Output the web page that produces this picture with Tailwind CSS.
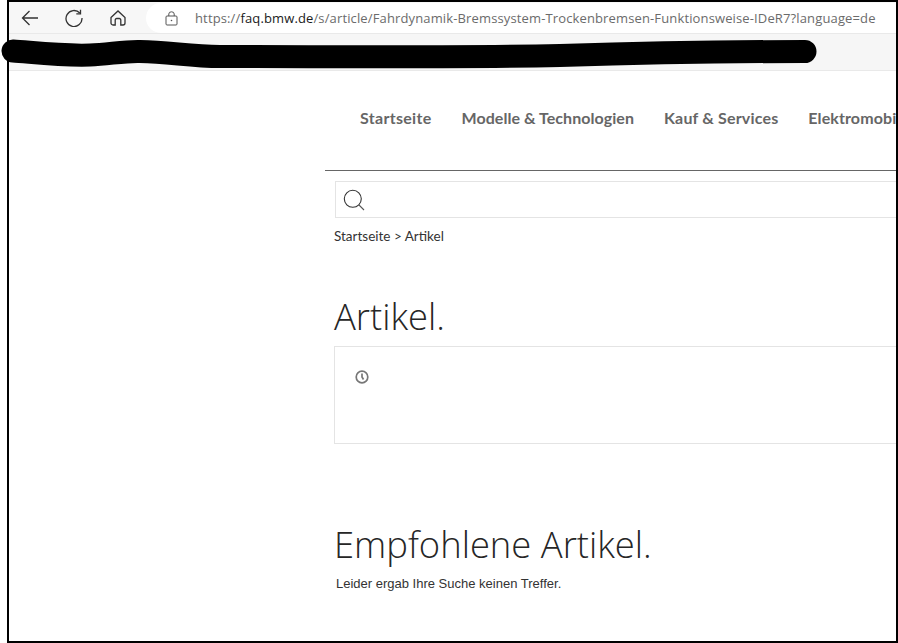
<!DOCTYPE html>
<html lang="de">
<head>
<meta charset="utf-8">
<script src="https://cdn.jsdelivr.net/npm/@tailwindcss/browser@4"></script>
</head>
<body class="bg-white overflow-hidden">
<div class="relative w-[898px] h-[643px] overflow-hidden pl-[7px] font-['Open_Sans',sans-serif]">
  <div class="h-full border-2 border-black flex flex-col overflow-hidden">
    <!-- browser toolbar -->
    <div class="h-[31px] shrink-0 bg-[#f7f7f7] flex items-start">
      <div class="w-[137px] shrink-0 flex items-center h-[31px] text-[#333]">
        <svg class="ml-[12px] w-[18px] h-[18px]" viewBox="0 0 18 18" fill="none" stroke="#333" stroke-width="1.3"><path d="M17 9H1.500M8.500 2 1.500 9l7 7"/></svg>
        <svg class="ml-[26px] w-[18px] h-[18px]" viewBox="0 0 18 18" fill="none" stroke="#333" stroke-width="1.3"><path d="M14.800 4A8 8 0 1 0 17 9"/><path d="M15.500 .8V4.800H11.300"/></svg>
        <svg class="ml-[27px] w-[16px] h-[16px]" viewBox="0 0 16 16" fill="none" stroke="#333" stroke-width="1.3"><path d="M1 7.500 8 1l7 6.500V13a2 2 0 0 1-2 2h-2.200V10a1.500 1.500 0 0 0-1.500-1.500H6.700A1.500 1.500 0 0 0 5.200 10v5H3a2 2 0 0 1-2-2Z"/></svg>
      </div>
      <div class="flex-1 h-[30px] mt-[1px] bg-white rounded-l-[15px] flex items-center pl-[19px]">
        <svg class="w-[13px] h-[15px] shrink-0" viewBox="0 0 13 15" fill="none" stroke="#555" stroke-width="1"><rect x="1" y="5" width="11" height="9" rx="1"/><path d="M3.800 5V3a2.700 2.200 0 0 1 5.400 0v2"/><circle cx="6.500" cy="9.500" r=".8" fill="#555" stroke="none"/></svg>
        <div class="ml-[17px] text-[13px] leading-[18px] tracking-[0.135px] text-[#6b6b6b] whitespace-nowrap">https://<span class="text-[#1a1a1a]">faq.bmw.de</span>/s/article/Fahrdynamik-Bremssystem-Trockenbremsen-Funktionsweise-IDeR7?language=de</div>
      </div>
    </div>
    <!-- bookmarks bar -->
    <div class="h-[38px] shrink-0 bg-[#f6f6f6] border-t border-[#e9e9e9] border-b"></div>
    <!-- page -->
    <div class="relative flex-1 bg-white pl-[316px] overflow-hidden min-w-0">
      <nav class="h-[100px] flex items-start pt-[36px] pl-[35px] gap-[30px] whitespace-nowrap text-[16px] leading-[22px] font-bold text-[#666] font-['Lato',sans-serif] border-b border-[#666] w-[700px]">
        <span class="tracking-[0.3px]">Startseite</span><span class="tracking-[0.05px]">Modelle &amp; Technologien</span><span class="tracking-[0.17px]">Kauf &amp; Services</span><span class="tracking-[0.1px]">Elektromobilität</span>
      </nav>
      <div class="ml-[10px] mt-[10px] h-[37px] w-[700px] border border-[#e4e4e4] flex items-center pl-[7px]">
        <svg class="w-[22px] h-[22px]" viewBox="0 0 22 22" fill="none" stroke="#333" stroke-width="1.1"><circle cx="9.800" cy="9.800" r="8.500"/><path d="m16 16 5 5" stroke="#555"/></svg>
      </div>
      <div class="ml-[9px] mt-[9px] text-[13.5px] leading-[18px] text-[#333] font-['Lato',sans-serif]">Startseite &gt; Artikel</div>
      <h1 class="ml-[9px] mt-[47px] text-[36.4px] leading-[48px] font-light text-[#262626]">Artikel.</h1>
      <div class="ml-[9px] mt-[6px] w-[700px] h-[98px] border border-[#e4e4e4] pl-[20px] pt-[23px]">
        <svg class="w-[14px] h-[14px]" viewBox="0 0 14 14" fill="none" stroke="#777" stroke-width="1.700"><circle cx="7" cy="7" r="5.800"/><path d="M7 3.500V7l1.500 2.500"/></svg>
      </div>
      <h2 class="ml-[9px] mt-[76px] text-[36.4px] leading-[48px] font-light text-[#262626]">Empfohlene Artikel.</h2>
      <p class="ml-[11px] mt-[7px] text-[13px] leading-[18px] text-[#333] font-['Liberation_Sans',sans-serif]">Leider ergab Ihre Suche keinen Treffer.</p>
    </div>
  </div>
  <!-- redaction scribble -->
  <svg class="absolute left-0 top-0 w-[898px] h-[80px] pointer-events-none" viewBox="0 0 898 80" fill="none">
    <path d="M13 51 C30 52 60 56 90 55 C110 54 125 51 140 51.500 C170 52 190 56.500 220 56.500 C350 57 480 57 560 55.500 C640 53 720 51.500 805 51.500" stroke="#000" stroke-width="23" stroke-linecap="round"/>
  </svg>
</div>
</body>
</html>
